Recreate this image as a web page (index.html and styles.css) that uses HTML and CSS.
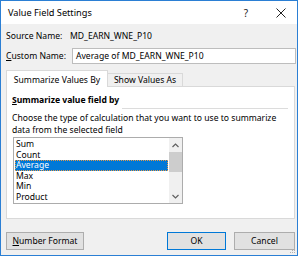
FILE: index.html
```html
<!DOCTYPE html>
<html lang="en">
<head>
    <meta charset="UTF-8">
    <title>Value Field Settings</title>
    <link rel="stylesheet" href="styles.css">
</head>
<body>

    <div class="dialog">
        <div class="titlebar">
            <span class="title">Value Field Settings</span>
            <span class="help">?</span>
            <span class="close">
                <svg width="10" height="10" viewBox="0 0 10 10">
                    <path d="M0.5 0.5 L9.5 9.5 M9.5 0.5 L0.5 9.5" stroke="#222" stroke-width="1" fill="none"/>
                </svg>
            </span>
        </div>

        <div class="content">
            <div class="row source-row">
                <span class="label source-label">Source Name:</span>
                <span class="source-value">MD_EARN_WNE_P10</span>
            </div>

            <div class="row custom-row">
                <label class="label custom-label"><u>C</u>ustom Name:</label>
                <div class="text-input">Average of MD_EARN_WNE_P10</div>
            </div>

            <div class="tabs">
                <div class="tab active">Summarize Values By</div>
                <div class="tab">Show Values As</div>
            </div>

            <div class="panel">
                <div class="group-title">
                    <span><u>S</u>ummarize value field by</span>
                    <span class="rule"></span>
                </div>
                <p class="hint">Choose the type of calculation that you want to use to summarize<br>data from the selected field</p>

                <div class="listbox">
                    <ul class="items">
                        <li>Sum</li>
                        <li>Count</li>
                        <li class="selected">Average</li>
                        <li>Max</li>
                        <li>Min</li>
                        <li>Product</li>
                    </ul>
                    <div class="scrollbar">
                        <div class="arrow">
                            <svg width="7" height="5" viewBox="0 0 7 5"><polyline points="0.5,4 3.5,1 6.5,4" stroke="#606060" stroke-width="1.2" fill="none"/></svg>
                        </div>
                        <div class="thumb"></div>
                        <div class="track"></div>
                        <div class="arrow">
                            <svg width="7" height="5" viewBox="0 0 7 5"><polyline points="0.5,1 3.5,4 6.5,1" stroke="#606060" stroke-width="1.2" fill="none"/></svg>
                        </div>
                    </div>
                </div>
            </div>

            <div class="buttons">
                <button class="btn number-btn"><u>N</u>umber Format</button>
                <span class="spacer"></span>
                <button class="btn ok-btn">OK</button>
                <button class="btn cancel-btn">Cancel</button>
            </div>
        </div>

        <svg class="grip" width="6" height="6" viewBox="0 0 6 6">
            <rect x="4" y="0" width="1" height="1" fill="#b0b0b0"/>
            <rect x="2" y="2" width="1" height="1" fill="#b0b0b0"/>
            <rect x="4" y="2" width="1" height="1" fill="#b0b0b0"/>
            <rect x="0" y="4" width="1" height="1" fill="#b0b0b0"/>
            <rect x="2" y="4" width="1" height="1" fill="#b0b0b0"/>
            <rect x="4" y="4" width="1" height="1" fill="#b0b0b0"/>
        </svg>
    </div>

</body>
</html>
```

FILE: styles.css
```css
* {
    margin: 0;
    padding: 0;
    box-sizing: border-box;
}

body {
    font-family: 'Noto Sans', 'DejaVu Sans', sans-serif;
    font-size: 8.6px;
    color: #000;
    background: #fff;
}

.dialog {
    position: relative;
    width: 298px;
    height: 256px;
    border: 1px solid #2b7fd4;
    background: #f0f0f0;
    display: flex;
    flex-direction: column;
}

.titlebar {
    height: 23px;
    background: #fff;
    display: flex;
    align-items: center;
    padding-left: 7px;
}

.title {
    flex: 1;
    font-size: 9.2px;
}

.help {
    width: 32px;
    margin-right: 3px;
    text-align: center;
    font-size: 10px;
    color: #222;
}

.close {
    width: 32px;
    display: flex;
    justify-content: center;
}

.content {
    flex: 1;
    display: flex;
    flex-direction: column;
    padding: 6px 2px 0 5px;
}

.row {
    display: flex;
    align-items: center;
}

.source-row {
    height: 12px;
    line-height: 12px;
}

.label {
    flex: none;
}

.source-label {
    width: 64px;
}

.custom-row {
    height: 16px;
    margin-top: 6px;
}

.custom-label {
    width: 66px;
}

.text-input {
    flex: 1;
    height: 16px;
    line-height: 14px;
    border: 1px solid #bdbdbd;
    background: #fff;
    padding-left: 3px;
    margin-right: -1px;
}

.tabs {
    display: flex;
    align-items: flex-end;
    height: 16px;
    margin-top: 6px;
}

.tab {
    height: 13px;
    line-height: 12px;
    width: 75px;
    text-align: center;
    border: 1px solid #d9d9d9;
    border-left: none;
    border-bottom: none;
    background: #f0f0f0;
}

.tab.active {
    position: relative;
    z-index: 1;
    width: 102px;
    height: 17px;
    line-height: 18px;
    margin-bottom: -1px;
    border-left: 1px solid #d9d9d9;
    background: #fff;
}

.panel {
    height: 133px;
    background: #fff;
    border: 1px solid #d9d9d9;
    padding: 7px 6px 0 5px;
}

.group-title {
    display: flex;
    align-items: flex-end;
    height: 15px;
    font-weight: bold;
}

.group-title span:first-child {
    line-height: 12px;
    align-self: flex-start;
}

.rule {
    flex: 1;
    height: 1px;
    margin-left: 3px;
    background: #dcdcdc;
}

.hint {
    margin-top: 3px;
    line-height: 12px;
    white-space: nowrap;
}

.listbox {
    display: flex;
    width: 170px;
    height: 67px;
    margin-top: 1px;
    margin-left: 1px;
    border: 1px solid #acacac;
    background: #fff;
}

.items {
    flex: 1;
    list-style: none;
    padding: 1px 1px 0 1px;
}

.items li {
    height: 10.5px;
    line-height: 10.5px;
    padding-left: 1px;
}

.items li.selected {
    background: #0078d7;
    color: #fff;
    outline: 1px dotted #e59a4a;
    outline-offset: -1px;
}

.scrollbar {
    width: 13px;
    display: flex;
    flex-direction: column;
    background: #f0f0f0;
}

.arrow {
    height: 14px;
    display: flex;
    align-items: center;
    justify-content: center;
}

.thumb {
    height: 20px;
    background: #cdcdcd;
}

.track {
    flex: 1;
}

.buttons {
    display: flex;
    height: 18px;
    margin-top: 13px;
}

.spacer {
    flex: 1;
}

.btn {
    height: 18px;
    font-family: inherit;
    font-size: inherit;
    color: #000;
    background: #e1e1e1;
    border: 1px solid #adadad;
}

.number-btn {
    width: 78px;
}

.ok-btn {
    width: 59px;
    border-color: #0078d7;
}

.cancel-btn {
    width: 61px;
    margin-left: 8px;
}

.grip {
    position: absolute;
    right: 1px;
    bottom: 1px;
}
```
